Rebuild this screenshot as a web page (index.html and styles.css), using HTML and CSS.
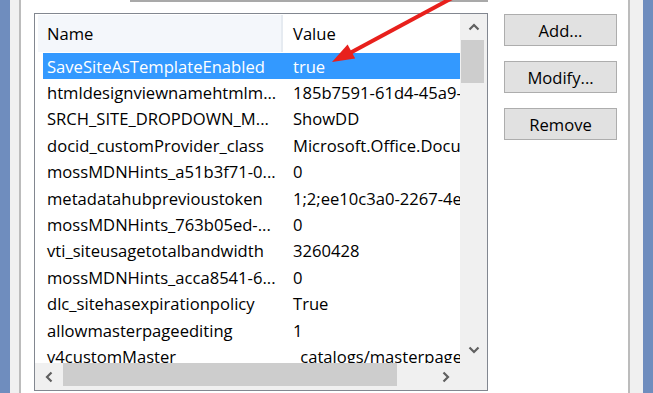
FILE: index.html
```html
<!DOCTYPE html>
<html lang="en">
<head>
    <meta charset="UTF-8">
    <title>Property Bag</title>
    <link rel="stylesheet" href="styles.css">
</head>
<body>
    <div class="desktop">
        <div class="edge"></div>
        <div class="frame">
            <div class="panel">
                <div class="textbox"></div>
                <div class="content">
                    <!-- 属性列表 -->
                    <div class="listbox">
                        <div class="view">
                            <div class="header">
                                <div class="hcell name-col">Name</div>
                                <div class="hcell">Value</div>
                            </div>
                            <div class="rows">
                                <div class="row selected"><span class="cell name-col">SaveSiteAsTemplateEnabled</span><span class="cell">true</span></div>
                                <div class="row"><span class="cell name-col">htmldesignviewnamehtmlm...</span><span class="cell">185b7591-61d4-45a9-8f6c</span></div>
                                <div class="row"><span class="cell name-col">SRCH_SITE_DROPDOWN_M...</span><span class="cell">ShowDD</span></div>
                                <div class="row"><span class="cell name-col">docid_customProvider_class</span><span class="cell">Microsoft.Office.DocumentManagement</span></div>
                                <div class="row"><span class="cell name-col">mossMDNHints_a51b3f71-0...</span><span class="cell">0</span></div>
                                <div class="row"><span class="cell name-col">metadatahubprevioustoken</span><span class="cell">1;2;ee10c3a0-2267-4e2f</span></div>
                                <div class="row"><span class="cell name-col">mossMDNHints_763b05ed-...</span><span class="cell">0</span></div>
                                <div class="row"><span class="cell name-col">vti_siteusagetotalbandwidth</span><span class="cell">3260428</span></div>
                                <div class="row"><span class="cell name-col">mossMDNHints_acca8541-6...</span><span class="cell">0</span></div>
                                <div class="row"><span class="cell name-col">dlc_sitehasexpirationpolicy</span><span class="cell">True</span></div>
                                <div class="row"><span class="cell name-col">allowmasterpageediting</span><span class="cell">1</span></div>
                                <div class="row"><span class="cell name-col">v4customMaster</span><span class="cell">_catalogs/masterpage/v4.master</span></div>
                            </div>
                        </div>
                        <!-- 竖向滚动条 -->
                        <div class="vscroll">
                            <div class="arrow">
                                <svg width="12" height="8" viewBox="0 0 12 8"><path d="M1.5 6.5 L6 2 L10.5 6.5" fill="none" stroke="#606060" stroke-width="2.2"/></svg>
                            </div>
                            <div class="vtrack"><div class="vthumb"></div></div>
                            <div class="arrow">
                                <svg width="12" height="8" viewBox="0 0 12 8"><path d="M1.5 1.5 L6 6 L10.5 1.5" fill="none" stroke="#606060" stroke-width="2.2"/></svg>
                            </div>
                        </div>
                        <!-- 横向滚动条 -->
                        <div class="hscroll">
                            <div class="arrow">
                                <svg width="8" height="12" viewBox="0 0 8 12"><path d="M6.5 1.5 L2 6 L6.5 10.5" fill="none" stroke="#606060" stroke-width="2.2"/></svg>
                            </div>
                            <div class="htrack"><div class="hthumb"></div></div>
                            <div class="arrow">
                                <svg width="8" height="12" viewBox="0 0 8 12"><path d="M1.5 1.5 L6 6 L1.5 10.5" fill="none" stroke="#606060" stroke-width="2.2"/></svg>
                            </div>
                        </div>
                        <div class="corner"></div>
                    </div>
                    <!-- 按钮 -->
                    <div class="buttons">
                        <div class="button">Add...</div>
                        <div class="button">Modify...</div>
                        <div class="button">Remove</div>
                    </div>
                </div>
            </div>
        </div>
        <div class="edge"></div>
    </div>

    <!-- 红色箭头 -->
    <svg class="pointer" width="653" height="393" viewBox="0 0 653 393">
        <line x1="454" y1="-3" x2="349" y2="53.5" stroke="#e8201c" stroke-width="4"/>
        <polygon points="332,62 347.6,44.6 355.2,58.6" fill="#e8201c"/>
    </svg>
</body>
</html>
```

FILE: styles.css
```css
* {
    margin: 0;
    padding: 0;
    box-sizing: border-box;
}

body {
    width: 653px;
    height: 393px;
    overflow: hidden;
    position: relative;
    font-family: "Open Sans", "Noto Sans", sans-serif;
    font-size: 16.6px;
    color: #000;
}

.desktop {
    display: flex;
    height: 393px;
}

/* 两侧的蓝色窗口边 */
.edge {
    width: 10px;
    background-color: #6f8dbe;
}

.frame {
    flex: 1;
    background-color: #f0f0f0;
    padding: 0 13px 0 9px;
}

.panel {
    height: 100%;
    background-color: #fff;
    border-left: 2px solid #bcbcbc;
    border-right: 2px solid #bcbcbc;
}

/* 上方输入框的底边 */
.textbox {
    height: 2px;
    margin-left: 109px;
    width: 358px;
    border-top: 2px solid #a9a9a9;
    border-left: 1px solid #a9a9a9;
}

.content {
    display: flex;
    gap: 16px;
    margin-top: 11px;
    padding-left: 13px;
}

.listbox {
    width: 454px;
    height: 378px;
    border: 1px solid #828790;
    display: grid;
    grid-template-columns: 1fr 27px;
    grid-template-rows: 1fr 27px;
}

.view {
    overflow: hidden;
}

.header {
    display: flex;
    height: 39px;
    padding: 1px 0 1px 3px;
}

.hcell {
    display: flex;
    align-items: center;
}

.header .name-col {
    width: 245px;
    flex-shrink: 0;
    background-color: #f4f7fb;
    border-right: 2px solid #e6ebf1;
    padding-left: 9px;
}

.header .hcell + .hcell {
    padding-left: 10px;
}

.rows {
    padding-left: 8px;
}

.row {
    display: flex;
    height: 26.4px;
    align-items: center;
    white-space: nowrap;
}

.cell {
    padding-left: 4px;
}

.row .name-col {
    width: 246px;
    flex-shrink: 0;
}

.selected {
    background-color: #3399ff;
    color: #fff;
}

/* 滚动条 */
.vscroll {
    background-color: #f0f0f0;
    display: flex;
    flex-direction: column;
}

.vscroll .arrow {
    height: 26px;
    display: flex;
    align-items: center;
    justify-content: center;
}

.vtrack {
    flex: 1;
    padding: 0 3px 0 1px;
}

.vthumb {
    height: 43px;
    background-color: #cdcdcd;
}

.hscroll {
    background-color: #f0f0f0;
    display: flex;
}

.hscroll .arrow {
    width: 28px;
    display: flex;
    align-items: center;
    justify-content: center;
}

.htrack {
    flex: 1;
    padding: 0 0 4px 0;
}

.hthumb {
    width: 334px;
    height: 100%;
    background-color: #cdcdcd;
}

.corner {
    background-color: #f0f0f0;
}

/* 右侧按钮 */
.buttons {
    display: flex;
    flex-direction: column;
    gap: 15px;
    padding-top: 1px;
}

.button {
    width: 113px;
    height: 32px;
    background-color: #e1e1e1;
    border: 1px solid #adadad;
    display: flex;
    align-items: center;
    justify-content: center;
}

.pointer {
    position: absolute;
    left: 0;
    top: 0;
}
```
